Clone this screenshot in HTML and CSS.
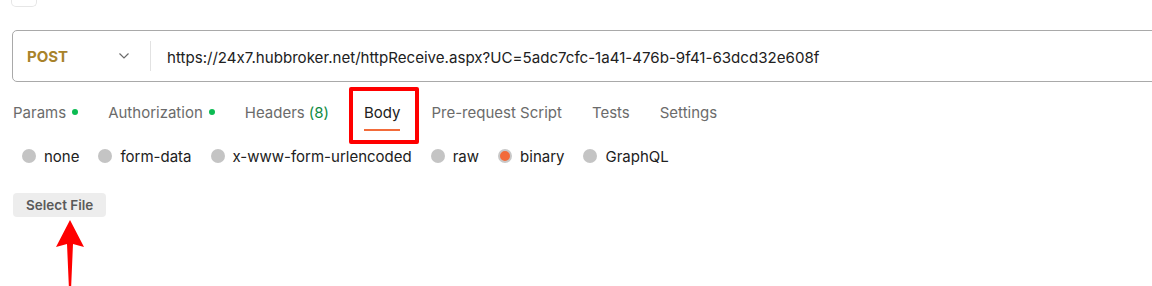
FILE: index.html
```html
<!DOCTYPE html>
<html lang="en">
<head>
    <meta charset="UTF-8">
    <meta name="viewport" content="width=device-width, initial-scale=1.0">
    <title>Request</title>
    <link rel="stylesheet" href="styles.css">
</head>
<body>
    <div class="request-page">
        <div class="title-row">
            <div class="back-box"></div>
        </div>

        <div class="url-bar">
            <div class="method">
                <span class="method-name">POST</span>
                <svg class="chevron" width="12" height="8" viewBox="0 0 12 8">
                    <path d="M1.5 1.5 L6 6 L10.5 1.5" fill="none" stroke="#6b6b6b" stroke-width="1.2"/>
                </svg>
            </div>
            <div class="url-text">https://24x7.hubbroker.net/httpReceive.aspx?UC=5adc7cfc-1a41-476b-9f41-63dcd32e608f</div>
        </div>

        <div class="tabs">
            <div class="tab">Params <span class="dot"></span></div>
            <div class="tab">Authorization <span class="dot"></span></div>
            <div class="tab">Headers <span class="count">(8)</span></div>
            <div class="tab active">Body</div>
            <div class="tab">Pre-request Script</div>
            <div class="tab">Tests</div>
            <div class="tab">Settings</div>
        </div>

        <div class="body-types">
            <label class="radio"><span class="circle"></span>none</label>
            <label class="radio"><span class="circle"></span>form-data</label>
            <label class="radio"><span class="circle"></span>x-www-form-urlencoded</label>
            <label class="radio"><span class="circle"></span>raw</label>
            <label class="radio"><span class="circle checked"></span>binary</label>
            <label class="radio"><span class="circle"></span>GraphQL</label>
        </div>

        <div class="file-row">
            <button class="select-file">Select File</button>
        </div>

        <!-- anotaciones -->
        <div class="mark-box"></div>
        <svg class="mark-arrow" width="40" height="70" viewBox="0 0 40 70">
            <polygon points="20,0 34,27 23,24 21,70 19,70 17,24 6,27" fill="#ff0000"/>
        </svg>
    </div>
</body>
</html>
```

FILE: styles.css
```css
body {
    margin: 0;
    background-color: white;
    font-family: Inter, "Noto Sans", sans-serif;
    font-feature-settings: "calt" 0;
    color: #212121;
    overflow: hidden;
}

.request-page {
    position: relative;
    height: 286px;
    overflow: hidden;
}

.title-row {
    height: 31px;
    padding-left: 11px;
}

.back-box {
    width: 26px;
    height: 8px;
    margin-top: -1px;
    border: 1px solid #e6e6e6;
    border-top: none;
    border-radius: 0 0 5px 5px;
    box-sizing: border-box;
}

.url-bar {
    margin-left: 12px;
    margin-right: -10px;
    height: 52px;
    border: 1px solid #a9a9a9;
    border-radius: 5px;
    box-sizing: border-box;
    display: flex;
    align-items: center;
}

.method {
    width: 138px;
    height: 30px;
    padding-left: 14px;
    box-sizing: border-box;
    border-right: 1px solid #e2e2e2;
    display: flex;
    align-items: center;
}

.method-name {
    font-size: 15px;
    font-weight: 700;
    color: #a8832a;
    width: 91px;
}

.chevron {
    display: block;
}

.url-text {
    padding-left: 16px;
    font-size: 15.1px;
    color: #212121;
    padding-top: 2px;
}

.tabs {
    display: flex;
    gap: 30px;
    padding-left: 13px;
    margin-top: 12px;
    height: 37px;
}

.tab {
    font-size: 15px;
    color: #6b6b6b;
    display: flex;
    align-items: center;
    gap: 6px;
    height: 37px;
    padding-top: 1px;
    box-sizing: border-box;
    border-bottom: 2px solid transparent;
}

.tab.active {
    color: #212121;
    border-bottom-color: #f26b3a;
    margin-left: 5px;
}

.tab.active + .tab {
    margin-left: 1px;
}

.dot {
    width: 6px;
    height: 6px;
    border-radius: 50%;
    background-color: #0cbb52;
}

.count {
    color: #0f8a3f;
    margin-left: -2px;
}

.body-types {
    display: flex;
    gap: 19px;
    padding-left: 22px;
    margin-top: 14px;
    height: 22px;
    align-items: center;
}

.radio {
    display: flex;
    align-items: center;
    gap: 8px;
    font-size: 15px;
    color: #212121;
}

.circle {
    width: 14px;
    height: 14px;
    border-radius: 50%;
    background-color: #c4c4c4;
    box-sizing: border-box;
}

.circle.checked {
    background-color: #f26b3a;
    border: 2px solid #c8c8c8;
}

.file-row {
    padding-left: 13px;
    margin-top: 26px;
}

.select-file {
    font-family: Inter, "Noto Sans", sans-serif;
    font-size: 13.5px;
    font-weight: 600;
    color: #5a5a5a;
    background-color: #ededed;
    border: none;
    border-radius: 4px;
    padding: 0 13px;
    height: 24px;
}

.mark-box {
    position: absolute;
    left: 349px;
    top: 87px;
    width: 70px;
    height: 57px;
    border: 4px solid #ff0000;
    border-radius: 2px;
    box-sizing: border-box;
}

.mark-arrow {
    position: absolute;
    left: 50px;
    top: 220px;
}
```
